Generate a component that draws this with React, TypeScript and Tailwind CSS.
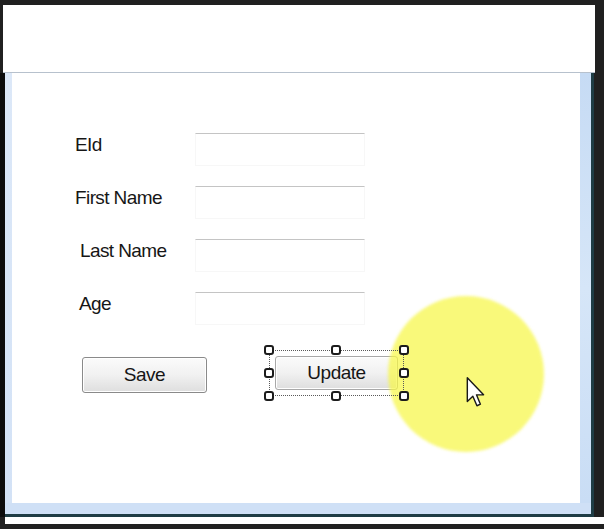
import React from 'react'

const font = { fontFamily: '"Liberation Sans", Arial, sans-serif' }

const fields = [
  { label: 'EId', pad: 'pl-[63px]' },
  { label: 'First Name', pad: 'pl-[63px]' },
  { label: 'Last Name', pad: 'pl-[68px]' },
  { label: 'Age', pad: 'pl-[67px]' },
]

function Handle({ className }: { className: string }) {
  return (
    <span
      className={`absolute z-20 h-[10px] w-[10px] rounded-[3px] border-2 border-[#1c1c1c] bg-white ${className}`}
    />
  )
}

function WinButton({ children, className }: { children: React.ReactNode; className?: string }) {
  return (
    <div
      className={`flex items-center justify-center rounded-[3px] border border-[#8a8a8a] bg-gradient-to-b from-[#fbfbfb] via-[#f1f1f1] to-[#dedede] text-[19px] tracking-[-0.5px] text-[#161616] shadow-[inset_0_0_0_1px_#ffffff] ${className ?? ''}`}
    >
      {children}
    </div>
  )
}

function Cursor() {
  return (
    <svg width="20" height="30" viewBox="0 0 12 19" className="overflow-visible">
      <path
        d="M0.5 0.5 L0.5 15.5 L4 12.2 L6.6 18.2 L8.8 17.2 L6.3 11.3 L10.8 11.3 Z"
        fill="#ffffff"
        stroke="#1a1a1a"
        strokeWidth="0.9"
        strokeLinejoin="round"
      />
    </svg>
  )
}

export default function App() {
  return (
    <div className="flex h-[529px] w-[604px] flex-col overflow-hidden bg-[#202020]" style={font}>
      <div className="h-[5px] shrink-0" />
      <div className="ml-[3px] mr-[9px] h-[68px] shrink-0 border-b border-[#b7c1cd] bg-white" />

      <div className="flex min-h-0 flex-1">
        <div className="w-[5px] bg-[#0c0c0c]" />
        <div className="flex w-[589px] flex-col border-b-[3px] border-r-[3px] border-[#1f3d45]">
          <div className="flex min-h-0 flex-1">
            <div className="w-[7px] bg-gradient-to-b from-[#dce8f8] to-[#d3e2f6]" />

            {/* form surface */}
            <div className="relative flex-1 overflow-hidden bg-white">
              <div className="flex flex-col gap-[20px] pt-[60px]">
                {fields.map((f) => (
                  <div key={f.label} className="grid h-[33px] grid-cols-[183px_170px]">
                    <div className={`${f.pad} pt-[1px] text-[19px] leading-[22px] tracking-[-0.6px] text-[#161616]`}>
                      {f.label}
                    </div>
                    <div className="border border-[#f7f7f7] border-t-[#c4c4c4] bg-white" />
                  </div>
                ))}
              </div>

              <div className="mt-[32px] flex items-start pl-[70px]">
                <WinButton className="h-[36px] w-[125px]">Save</WinButton>
                <div className="relative ml-[68px] -mt-[1px]">
                  <WinButton className="h-[34px] w-[123px] border-[#a8a8a8]">Update</WinButton>
                  <div className="absolute -inset-[6px] z-20 border border-dotted border-[#5a5a5a]" />
                  <Handle className="-left-[11px] -top-[11px]" />
                  <Handle className="left-[56px] -top-[11px]" />
                  <Handle className="-right-[11px] -top-[11px]" />
                  <Handle className="-left-[11px] top-[12px]" />
                  <Handle className="-right-[11px] top-[12px]" />
                  <Handle className="-bottom-[11px] -left-[11px]" />
                  <Handle className="-bottom-[11px] left-[56px]" />
                  <Handle className="-bottom-[11px] -right-[11px]" />
                </div>
              </div>

              {/* click highlight */}
              <div className="pointer-events-none absolute left-[376px] top-[223px] z-10 h-[156px] w-[156px] rounded-full bg-[rgba(246,246,70,0.72)] blur-[1.5px]" />
              <div className="pointer-events-none absolute left-[454px] top-[304px] z-30">
                <Cursor />
              </div>
            </div>

            <div className="w-[11px] bg-gradient-to-b from-[#c6dbf4] via-[#d6e6f8] to-[#c9ddf5]" />
          </div>
          <div className="h-[11px] bg-[#cfe0f6]" />
        </div>
      </div>

      <div className="ml-[5px] h-[7px] shrink-0 bg-white" />
      <div className="h-[5px] shrink-0" />
    </div>
  )
}
